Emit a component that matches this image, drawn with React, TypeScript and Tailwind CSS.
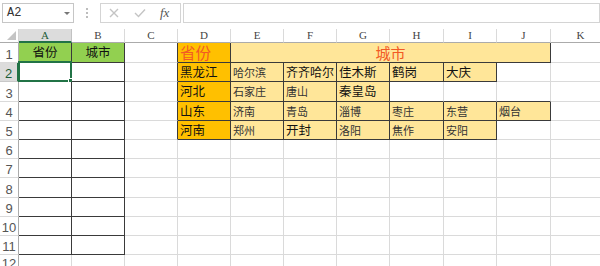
import React from "react";

type CellDef = { t: string; size?: number; color?: string; fill?: string; align?: "left" | "center"; span?: number };

const COLS = ["A", "B", "C", "D", "E", "F", "G", "H", "I", "J", "K"];
const ROW_H = [20, 19, 20, 19, 19, 19, 19, 20, 19, 19, 19, 12];

const GREEN = "#92d050";
const ORANGE = "#ffc000";
const LIGHT = "#ffe699";
const RED = "#f25a24";
const BIG = 12.5;
const SM = 11;

const cells: Record<string, CellDef> = {
  "1,0": { t: "省份", size: BIG, fill: GREEN, align: "center" },
  "1,1": { t: "城市", size: BIG, fill: GREEN, align: "center" },
  "1,3": { t: "省份", size: 15.5, fill: ORANGE, color: RED },
  "1,4": { t: "城市", size: 15, fill: LIGHT, color: RED, align: "center", span: 6 },
  "2,3": { t: "黑龙江", size: BIG, fill: ORANGE },
  "2,4": { t: "哈尔滨", size: SM, fill: LIGHT, color: "#333" },
  "2,5": { t: "齐齐哈尔", size: 12, fill: LIGHT },
  "2,6": { t: "佳木斯", size: BIG, fill: LIGHT },
  "2,7": { t: "鹤岗", size: BIG, fill: LIGHT },
  "2,8": { t: "大庆", size: BIG, fill: LIGHT },
  "3,3": { t: "河北", size: BIG, fill: ORANGE },
  "3,4": { t: "石家庄", size: SM, fill: LIGHT, color: "#333" },
  "3,5": { t: "唐山", size: SM, fill: LIGHT, color: "#333" },
  "3,6": { t: "秦皇岛", size: BIG, fill: LIGHT },
  "4,3": { t: "山东", size: BIG, fill: ORANGE },
  "4,4": { t: "济南", size: SM, fill: LIGHT, color: "#333" },
  "4,5": { t: "青岛", size: SM, fill: LIGHT, color: "#333" },
  "4,6": { t: "淄博", size: SM, fill: LIGHT, color: "#333" },
  "4,7": { t: "枣庄", size: SM, fill: LIGHT, color: "#333" },
  "4,8": { t: "东营", size: SM, fill: LIGHT, color: "#333" },
  "4,9": { t: "烟台", size: SM, fill: LIGHT, color: "#333" },
  "5,3": { t: "河南", size: BIG, fill: ORANGE },
  "5,4": { t: "郑州", size: SM, fill: LIGHT, color: "#333" },
  "5,5": { t: "开封", size: BIG, fill: LIGHT },
  "5,6": { t: "洛阳", size: SM, fill: LIGHT, color: "#333" },
  "5,7": { t: "焦作", size: SM, fill: LIGHT, color: "#333" },
  "5,8": { t: "安阳", size: SM, fill: LIGHT, color: "#333" },
};

const tableEnd: Record<number, number> = { 1: 9, 2: 8, 3: 6, 4: 9, 5: 8 };

function bordered(r: number, c: number): boolean {
  if (r >= 1 && r <= 11 && c >= 0 && c <= 1) return true;
  const e = tableEnd[r];
  if (e !== undefined && c >= 3 && c <= e) return true;
  return false;
}

const FONT = { fontFamily: '"Noto Sans CJK SC", "Noto Sans", sans-serif' };

export default function App() {
  const gridCells: React.ReactNode[] = [];
  gridCells.push(
    <div key="corner" className="relative bg-white border-r border-b border-r-[#d4d4d4] border-b-[#ababab]">
      <div className="absolute right-[2px] bottom-[2px] w-0 h-0 border-l-[9px] border-l-transparent border-b-[9px] border-b-[#c4c4c4]" />
    </div>
  );
  COLS.forEach((c, i) => {
    const sel = i === 0;
    gridCells.push(
      <div
        key={"h" + c}
        className={
          sel
            ? "flex items-center justify-center bg-[#dcdcdc] border-r border-b-2 border-r-[#c2c2c2] border-b-[#217346] text-[#1e5c38] text-[11px]"
            : "flex items-center justify-center bg-white border-r border-b border-r-[#dadada] border-b-[#ababab] text-[#444] text-[11px]"
        }
        style={{ fontFamily: '"Liberation Serif", serif' }}
      >
        {c}
      </div>
    );
  });

  for (let r = 1; r <= 12; r++) {
    const sel = r === 2;
    const last = r === 12;
    gridCells.push(
      <div
        key={"r" + r}
        className={
          sel
            ? "flex items-end justify-center pb-[1px] bg-[#dcdcdc] border-r-2 border-b border-r-[#217346] border-b-[#c8c8c8] text-[#1e5c38] text-[13px] leading-none"
            : last
            ? "flex items-start justify-center pt-[2px] overflow-hidden bg-white border-r border-r-[#ababab] text-[#555] text-[13px] leading-none"
            : "flex items-end justify-center pb-[1px] bg-white border-r border-b border-r-[#ababab] border-b-[#dadada] text-[#555] text-[13px] leading-none"
        }
        style={{ fontFamily: '"Liberation Sans", sans-serif' }}
      >
        {r}
      </div>
    );
    for (let c = 0; c < COLS.length; c++) {
      if (r === 1 && c >= 5 && c <= 9) continue;
      const def = cells[`${r},${c}`];
      const span = def?.span ?? 1;
      const lastC = c + span - 1;
      const darkR = bordered(r, lastC) || bordered(r, lastC + 1);
      let darkB = false;
      for (let k = c; k <= lastC; k++) if (bordered(r, k) || bordered(r + 1, k)) darkB = true;
      const cls = [
        "relative flex items-center border-r border-b whitespace-nowrap overflow-visible leading-none px-[2px]",
        darkR ? "border-r-[#3a3a3a]" : "border-r-[#dadada]",
        darkB ? "border-b-[#3a3a3a]" : "border-b-[#dadada]",
        def?.align === "center" ? "justify-center" : "justify-start",
        span === 6 ? "col-span-6" : "",
      ].join(" ");
      gridCells.push(
        <div
          key={`${r},${c}`}
          className={cls}
          style={{
            ...FONT,
            backgroundColor: def?.fill ?? "#ffffff",
            color: def?.color ?? "#111111",
            fontSize: def?.size ? `${def.size}px` : undefined,
          }}
        >
          {def?.t}
          {r === 2 && c === 0 && (
            <>
              <div className="absolute -left-[1px] -top-[2px] -right-[1px] -bottom-[1px] border-2 border-[#217346] pointer-events-none" />
              <div className="absolute -right-[3px] -bottom-[3px] w-[6px] h-[6px] bg-[#217346] border border-white" />
            </>
          )}
        </div>
      );
    }
  }

  return (
    <div className="w-[600px] h-[266px] overflow-hidden bg-white relative">
      <div className="h-[29px] flex items-start pt-[3px]">
        <div
          className="ml-[2px] w-[72px] h-[20px] border border-[#c6c6c6] flex items-center justify-between pl-[4px] pr-[3px] text-[12px] text-[#333]"
          style={{ fontFamily: '"Liberation Mono", monospace' }}
        >
          <span>A2</span>
          <div className="w-0 h-0 border-l-[3px] border-r-[3px] border-t-[3px] border-l-transparent border-r-transparent border-t-[#777]" />
        </div>
        <div className="w-[26px] h-[20px] flex flex-col items-center justify-center gap-[2px]">
          <div className="w-[2px] h-[2px] bg-[#bdbdbd]" />
          <div className="w-[2px] h-[2px] bg-[#bdbdbd]" />
          <div className="w-[2px] h-[2px] bg-[#bdbdbd]" />
        </div>
        <div className="w-[81px] h-[20px] border border-[#d4d4d4] flex items-center">
          <svg width="10" height="10" viewBox="0 0 10 10" className="ml-[8px]">
            <path d="M1 1 L9 9 M9 1 L1 9" stroke="#c4c4c4" strokeWidth="1.4" />
          </svg>
          <svg width="12" height="10" viewBox="0 0 12 10" className="ml-[15px]">
            <path d="M1 5 L4.5 8.5 L11 1.5" stroke="#c4c4c4" strokeWidth="1.4" fill="none" />
          </svg>
          <span
            className="ml-[14px] text-[13px] italic text-[#555]"
            style={{ fontFamily: '"Liberation Serif", serif' }}
          >
            fx
          </span>
        </div>
        <div className="ml-[2px] flex-1 h-[20px] border border-[#d4d4d4]" />
      </div>
      <div
        className="grid"
        style={{
          gridTemplateColumns: "19px 53px 53px 53px 53px 53px 53px 53px 54px 53px 54px 60px",
          gridTemplateRows: ["14px", ...ROW_H.map((h) => h + "px")].join(" "),
        }}
      >
        {gridCells}
      </div>
    </div>
  );
}
